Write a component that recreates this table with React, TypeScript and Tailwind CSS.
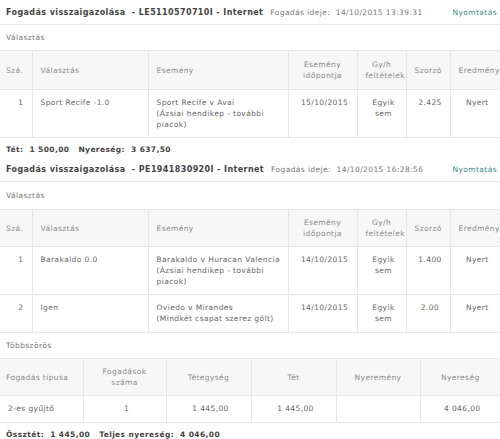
import React from "react";

type Sel = {
  no: string;
  choice: string;
  event: string[];
  date: string;
  odds: string;
  result: string;
};

type Bet = {
  id: string;
  time: string;
  rows: Sel[];
};

const BETS: Bet[] = [
  {
    id: "LE5110570710I",
    time: "14/10/2015 13:39:31",
    rows: [
      {
        no: "1",
        choice: "Sport Recife -1.0",
        event: ["Sport Recife v Avai", "(Ázsiai hendikep - további", "piacok)"],
        date: "15/10/2015",
        odds: "2.425",
        result: "Nyert",
      },
    ],
  },
  {
    id: "PE1941830920I",
    time: "14/10/2015 16:28:56",
    rows: [
      {
        no: "1",
        choice: "Barakaldo 0.0",
        event: ["Barakaldo v Huracan Valencia", "(Ázsiai hendikep - további", "piacok)"],
        date: "14/10/2015",
        odds: "1.400",
        result: "Nyert",
      },
      {
        no: "2",
        choice: "Igen",
        event: ["Oviedo v Mirandes", "(Mindkét csapat szerez gólt)"],
        date: "14/10/2015",
        odds: "2.00",
        result: "Nyert",
      },
    ],
  },
];

const th = "border-l border-[#e6e6e6] first:border-l-0 px-2 font-normal text-[#8a8a8a] align-middle";
const td = "border-l border-[#e6e6e6] first:border-l-0 pl-2 pr-1 pt-[7px] pb-[7px] align-top text-[#666]";

function TitleRow({ bet }: { bet: Bet }) {
  return (
    <div className="flex items-center h-[25px] border-b border-[#e8e8e8] pl-1.5 pr-[3px]">
      <span className="font-bold text-[8px] text-[#444] tracking-[0.4px] whitespace-pre">
        {`Fogadás visszaigazolása  - ${bet.id} - Internet`}
      </span>
      <span className="ml-[7px] text-[#777] whitespace-pre">{`Fogadás ideje:  ${bet.time}`}</span>
      <span className="ml-auto text-[#3b8c8c]">Nyomtatás</span>
    </div>
  );
}

function SelectionTable({ bet, tall }: { bet: Bet; tall: boolean }) {
  return (
    <table className="w-full table-fixed border-collapse">
      <colgroup>
        <col className="w-[32px]" />
        <col className="w-[116px]" />
        <col className="w-[140px]" />
        <col className="w-[69px]" />
        <col className="w-[49px]" />
        <col className="w-[44px]" />
        <col />
      </colgroup>
      <thead>
        <tr className={`bg-[#f7f7f7] border-y border-[#e6e6e6] ${tall ? "h-[39px]" : "h-[37px]"}`}>
          <th className={`${th} text-left pl-1.5`}>Szá.</th>
          <th className={`${th} text-left`}>Választás</th>
          <th className={`${th} text-left`}>Esemény</th>
          <th className={`${th} text-center`}>Esemény időpontja</th>
          <th className={`${th} text-center`}>Gy/h feltételek</th>
          <th className={`${th} text-center`}>Szorzó</th>
          <th className={`${th} text-center`}>Eredmény</th>
        </tr>
      </thead>
      <tbody>
        {bet.rows.map((r) => (
          <tr key={r.no} className="border-b border-[#e6e6e6] h-[38px]">
            <td className={`${td} text-right pr-2`}>{r.no}</td>
            <td className={td}>{r.choice}</td>
            <td className={td}>
              {r.event.map((l) => (
                <div key={l} className="whitespace-nowrap">{l}</div>
              ))}
            </td>
            <td className={`${td} text-center px-1`}>{r.date}</td>
            <td className={`${td} text-center px-1`}>
              <div>Egyik</div>
              <div>sem</div>
            </td>
            <td className={`${td} text-center px-1`}>{r.odds}</td>
            <td className={`${td} text-center px-1`}>{r.result}</td>
          </tr>
        ))}
      </tbody>
    </table>
  );
}

export default function App() {
  return (
    <div className="w-[500px] h-[439px] overflow-hidden bg-white font-['DejaVu_Sans',sans-serif] text-[7.5px] leading-[11px] tracking-[0.4px] text-[#666]">
      {/* first slip */}
      <TitleRow bet={BETS[0]} />
      <div className="h-[25px] flex items-center pl-1.5 text-[#777]">Választás</div>
      <SelectionTable bet={BETS[0]} tall />
      <div className="h-[19px] flex items-end pb-[2px] pl-1.5 font-bold text-[#444] whitespace-pre">
        {"Tét:  1 500,00   Nyereség:  3 637,50"}
      </div>

      {/* second slip */}
      <TitleRow bet={BETS[1]} />
      <div className="h-[27px] flex items-center pl-1.5 text-[#777]">Választás</div>
      <SelectionTable bet={BETS[1]} tall={false} />

      {/* multiples */}
      <div className="h-[25px] flex items-center pl-1.5 text-[#777]">Többszörös</div>
      <table className="w-full table-fixed border-collapse">
        <colgroup>
          <col className="w-[83px]" />
          <col className="w-[83px]" />
          <col className="w-[85px]" />
          <col className="w-[85px]" />
          <col className="w-[84px]" />
          <col />
        </colgroup>
        <thead>
          <tr className="bg-[#f7f7f7] border-y border-[#e6e6e6] h-[37px]">
            <th className={`${th} text-left pl-1.5`}>Fogadás típusa</th>
            <th className={`${th} text-center`}>
              <div>Fogadások</div>
              <div>száma</div>
            </th>
            <th className={`${th} text-center`}>Tétegység</th>
            <th className={`${th} text-center`}>Tét</th>
            <th className={`${th} text-center`}>Nyeremény</th>
            <th className={`${th} text-center`}>Nyereség</th>
          </tr>
        </thead>
        <tbody>
          <tr className="border-b border-[#e6e6e6] h-[27px]">
            <td className={`${td} align-middle py-0 pl-1.5 text-[#3b8c8c]`}>2-es gyűjtő</td>
            <td className={`${td} align-middle py-0 text-center`}>1</td>
            <td className={`${td} align-middle py-0 text-center`}>1 445,00</td>
            <td className={`${td} align-middle py-0 text-center`}>1 445,00</td>
            <td className={`${td} align-middle py-0`}></td>
            <td className={`${td} align-middle py-0 text-center`}>4 046,00</td>
          </tr>
        </tbody>
      </table>
      <div className="h-[22px] flex items-center pl-1.5 font-bold text-[#444] whitespace-pre">
        {"Össztét:  1 445,00   Teljes nyereség:  4 046,00"}
      </div>
    </div>
  );
}
